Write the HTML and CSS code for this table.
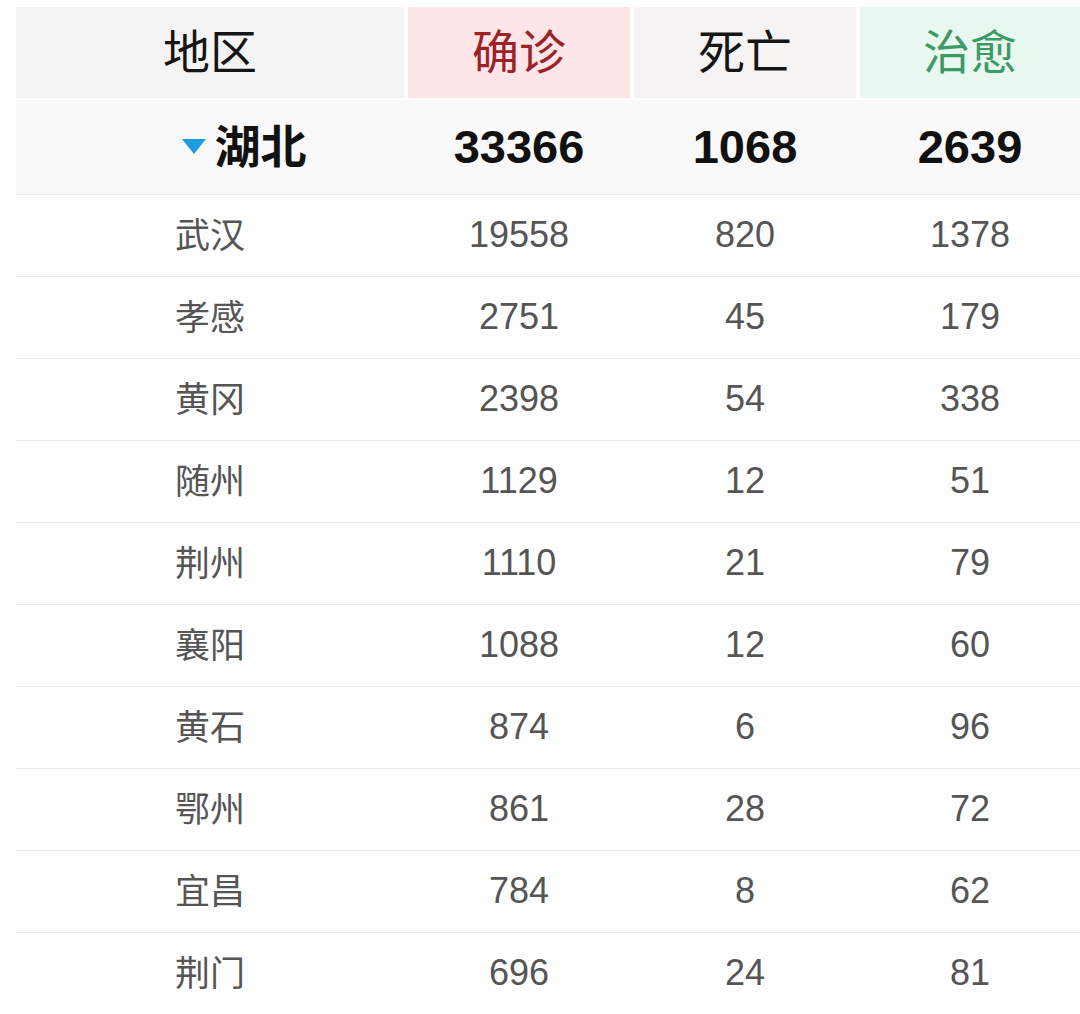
FILE: index.html
```html
<!DOCTYPE html>
<html lang="zh">
<head>
<meta charset="utf-8">
<title>湖北</title>
<link rel="stylesheet" href="styles.css">
</head>
<body>
<div class="table">
  <div class="row head">
    <div class="cell h-area">地区</div>
    <div class="cell h-conf">确诊</div>
    <div class="cell h-dead">死亡</div>
    <div class="cell h-cure">治愈</div>
  </div>
  <div class="row prov">
    <div class="cell prov-name"><svg class="tri" width="24" height="15" viewBox="0 0 24 15"><polygon points="0,0 24,0 12,15" fill="#1e9be0"/></svg><span>湖北</span></div>
    <div class="cell num-b">33366</div>
    <div class="cell num-b">1068</div>
    <div class="cell num-b">2639</div>
  </div>
  <div class="row city"><div class="cell name">武汉</div><div class="cell num">19558</div><div class="cell num">820</div><div class="cell num">1378</div></div>
  <div class="row city"><div class="cell name">孝感</div><div class="cell num">2751</div><div class="cell num">45</div><div class="cell num">179</div></div>
  <div class="row city"><div class="cell name">黄冈</div><div class="cell num">2398</div><div class="cell num">54</div><div class="cell num">338</div></div>
  <div class="row city"><div class="cell name">随州</div><div class="cell num">1129</div><div class="cell num">12</div><div class="cell num">51</div></div>
  <div class="row city"><div class="cell name">荆州</div><div class="cell num">1110</div><div class="cell num">21</div><div class="cell num">79</div></div>
  <div class="row city"><div class="cell name">襄阳</div><div class="cell num">1088</div><div class="cell num">12</div><div class="cell num">60</div></div>
  <div class="row city"><div class="cell name">黄石</div><div class="cell num">874</div><div class="cell num">6</div><div class="cell num">96</div></div>
  <div class="row city"><div class="cell name">鄂州</div><div class="cell num">861</div><div class="cell num">28</div><div class="cell num">72</div></div>
  <div class="row city"><div class="cell name">宜昌</div><div class="cell num">784</div><div class="cell num">8</div><div class="cell num">62</div></div>
  <div class="row city last"><div class="cell name">荆门</div><div class="cell num">696</div><div class="cell num">24</div><div class="cell num">81</div></div>
</div>
</body>
</html>
```
FILE: styles.css
```css
html, body {
  margin: 0;
  padding: 0;
  background: #ffffff;
}
body {
  width: 1080px;
  height: 1014px;
  overflow: hidden;
  font-family: "Noto Sans CJK SC", "Noto Sans", sans-serif;
}
.table {
  padding: 7px 0 0 16px;
  display: flex;
  flex-direction: column;
}
.row {
  display: grid;
  grid-template-columns: 388px 222px 222px 220px;
  column-gap: 4px;
}
.cell {
  display: flex;
  align-items: center;
  justify-content: center;
}
.head {
  height: 91px;
  margin-bottom: 2px;
}
.head .cell {
  font-size: 47px;
  color: #151515;
  padding-bottom: 8px;
}
.h-area { background: #f4f4f4; }
.h-conf { background: #fde5e8; color: #9a2228 !important; }
.h-dead { background: #f5f4f2; }
.h-cure { background: #e9f8ef; color: #3d9a68 !important; }

.prov {
  height: 94px;
  background: #f9f9f9;
  border-bottom: 1px solid #ececec;
  column-gap: 4px;
}
.prov-name {
  padding-left: 68px;
  padding-bottom: 8px;
  font-size: 46px;
  font-weight: 700;
  color: #111;
  gap: 9px;
}
.prov-name .tri {
  flex: none;
  margin-top: 6px;
}
.num-b {
  font-family: "Liberation Sans", Arial, sans-serif;
  font-weight: 700;
  font-size: 47px;
  color: #111;
  padding-bottom: 2px;
}
.city {
  height: 81px;
  border-bottom: 1px solid #eaeaea;
  background: #fefefe;
}
.city.last {
  border-bottom: none;
}
.name {
  font-size: 35px;
  color: #555;
  padding-bottom: 7px;
}
.num {
  font-family: "Liberation Sans", Arial, sans-serif;
  font-size: 36px;
  color: #555;
  padding-bottom: 1px;
}
```
